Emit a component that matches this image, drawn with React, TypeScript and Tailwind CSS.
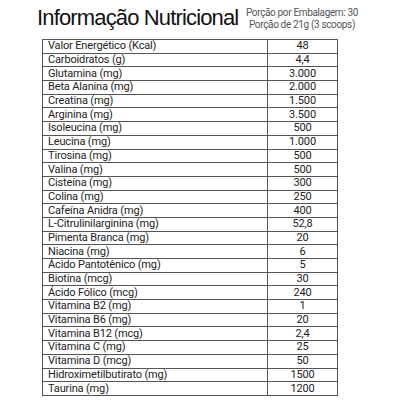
import React from 'react';

const rows: [string, string][] = [
  ['Valor Energético (Kcal)', '48'],
  ['Carboidratos (g)', '4,4'],
  ['Glutamina (mg)', '3.000'],
  ['Beta Alanina (mg)', '2.000'],
  ['Creatina (mg)', '1.500'],
  ['Arginina (mg)', '3.500'],
  ['Isoleucina (mg)', '500'],
  ['Leucina (mg)', '1.000'],
  ['Tirosina (mg)', '500'],
  ['Valina (mg)', '500'],
  ['Cisteína (mg)', '300'],
  ['Colina (mg)', '250'],
  ['Cafeína Anidra (mg)', '400'],
  ['L-Citrulinilarginina (mg)', '52,8'],
  ['Pimenta Branca (mg)', '20'],
  ['Niacina (mg)', '6'],
  ['Ácido Pantotênico (mg)', '5'],
  ['Biotina (mcg)', '30'],
  ['Ácido Fólico (mcg)', '240'],
  ['Vitamina B2 (mg)', '1'],
  ['Vitamina B6 (mg)', '20'],
  ['Vitamina B12 (mcg)', '2,4'],
  ['Vitamina C (mg)', '25'],
  ['Vitamina D (mcg)', '50'],
  ['Hidroximetilbutirato (mg)', '1500'],
  ['Taurina (mg)', '1200'],
];

export default function App() {
  return (
    <div className="w-[400px] h-[400px] bg-white overflow-hidden">
      <div className="flex items-start h-[39px]">
        <h1 className="ml-[37px] mt-[4px] w-[206px] text-[22px] leading-[28px] tracking-[-0.85px] text-[#111] whitespace-nowrap font-['Liberation_Sans',sans-serif]">
          Informação Nutricional
        </h1>
        <div className="mt-[7px] w-[118px] text-center text-[10px] leading-[12px] tracking-[-0.35px] text-[#555] whitespace-nowrap font-['Roboto',sans-serif]">
          <p>Porção por Embalagem: 30</p>
          <p>Porção de 21g (3 scoops)</p>
        </div>
      </div>
      <table className="ml-[42px] w-[296px] border-collapse text-[11px] tracking-[-0.15px] text-[#222] font-['Roboto',sans-serif]">
        <tbody>
          {rows.map(([name, value]) => (
            <tr key={name} className="h-[13.7px]">
              <td className="w-[225px] border border-[#555] pl-[5px] py-0 leading-[12px]">{name}</td>
              <td className="border border-[#555] text-center py-0 leading-[12px]">{value}</td>
            </tr>
          ))}
        </tbody>
      </table>
    </div>
  );
}
